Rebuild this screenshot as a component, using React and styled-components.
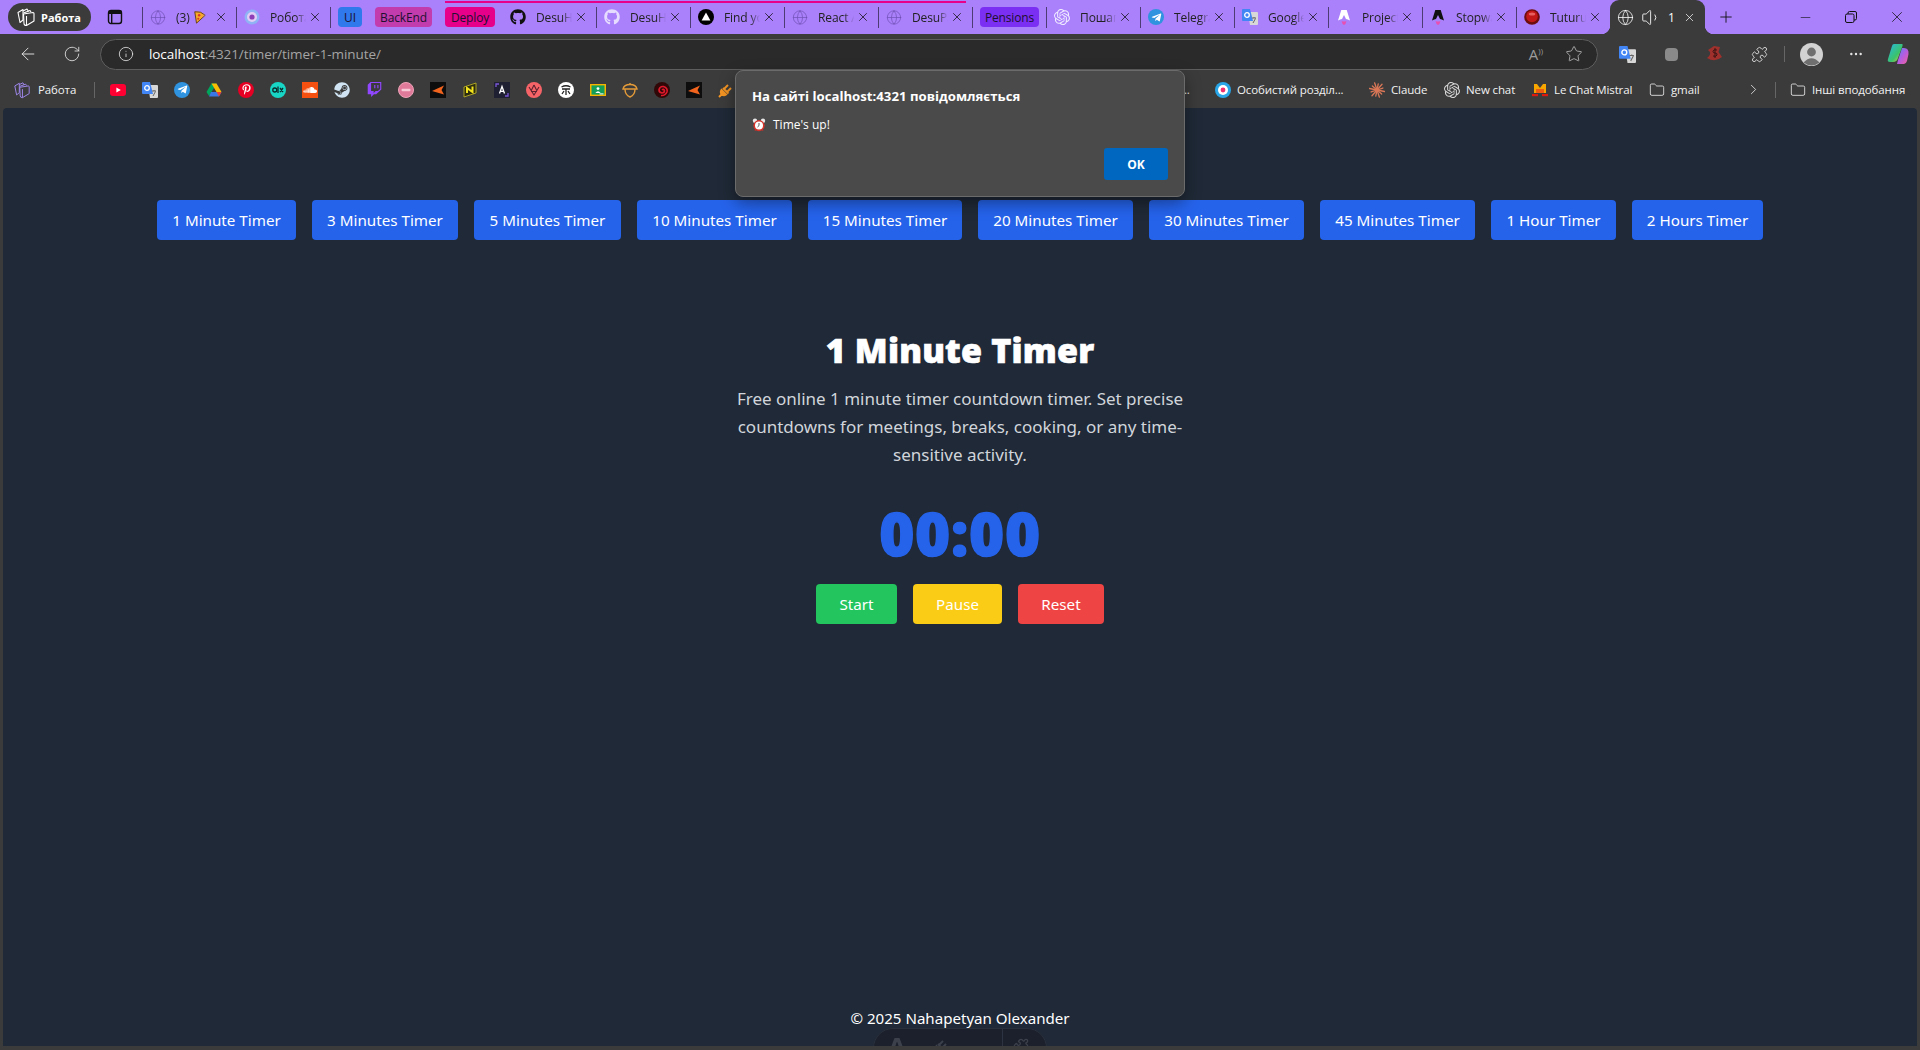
import React from "react";
import styled, { createGlobalStyle } from "styled-components";
import { Globe, Volume1, X, Plus, Minus, ArrowLeft, RotateCw, Info, Star, Ellipsis, ChevronRight, Folder, Puzzle } from "lucide-react";
import { FaGithub, FaTelegramPlane, FaPinterestP, FaSoundcloud, FaSteam, FaTwitch } from "react-icons/fa";
import { SiOpenai, SiAstro } from "react-icons/si";

const UI = `"Open Sans", "Noto Sans", sans-serif`;
const WEB = `"Noto Sans", "Open Sans", sans-serif`;

const Global = createGlobalStyle`
  html, body { margin: 0; padding: 0; background: #3b3b3b; }
  * { box-sizing: border-box; }
`;

const Window = styled.div`
  position: relative; width: 1920px; height: 1050px; display: flex; flex-direction: column;
  overflow: hidden; background: #3b3b3b; font-family: ${UI};
`;
const TabStrip = styled.div`
  height: 34px; flex: none; display: flex; align-items: center; background: #aa80fb; color: #1c1c1c; font-size: 12px;
`;
const WorkPill = styled.div`
  width: 83px; height: 28px; margin-left: 8px; border-radius: 14px; background: #3b3b3b; color: #fff;
  display: flex; align-items: center; gap: 5px; padding-left: 8px; font-size: 11px; font-weight: 700; flex: none;
`;
const SideBtn = styled.div` width: 20px; height: 20px; margin: 0 17px 0 14px; display: flex; align-items: center; justify-content: center; flex: none; `;
const Tab = styled.div`
  width: ${p => p.$w || 94}px; height: 21px; flex: none; display: flex; align-items: center; padding-left: 7px;
  border-left: ${p => (p.$noSep ? "1px solid transparent" : "1px solid #4d3b73")};
`;
const TabTitle = styled.div`
  flex: 1; min-width: 0; overflow: hidden; white-space: nowrap; letter-spacing: -0.1px; color: #222;
  display: flex; align-items: center; gap: 3px;
  -webkit-mask-image: linear-gradient(90deg, #000 72%, transparent 100%);
  mask-image: linear-gradient(90deg, #000 72%, transparent 100%);
`;
const TabClose = styled.div` width: 14px; margin: 0 8px 0 2px; display: flex; align-items: center; justify-content: center; flex: none; `;
const FavSlot = styled.div` width: 16px; height: 16px; margin-right: 10px; flex: none; display: flex; align-items: center; justify-content: center; `;
const Chip = styled.div`
  height: 20px; flex: none; margin-left: ${p => p.$ml}px; width: ${p => p.$w}px; border-radius: 4px; background: ${p => p.$bg}; color: #201030;
  display: flex; align-items: center; justify-content: center; font-size: 12px; letter-spacing: -0.15px;
`;
const Spacer = styled.div` width: ${p => p.$w}px; flex: none; `;
const DeployGroup = styled.div`
  position: relative; display: flex; align-items: center; height: 34px; flex: none;
  &::before { content: ""; position: absolute; left: 13px; right: 6px; top: 1px; height: 2px; background: #e6008a; }
`;
const ActiveTab = styled.div`
  position: relative; width: 95px; height: 34px; flex: none; background: #3b3b3b; border-radius: 9px 9px 0 0; color: #fff;
  display: flex; align-items: center; padding-left: 7px; font-size: 12px;
  &::before, &::after { content: ""; position: absolute; bottom: 0; width: 9px; height: 9px; }
  &::before { left: -9px; background: radial-gradient(circle at 0 0, transparent 9px, #3b3b3b 9.5px); }
  &::after { right: -9px; background: radial-gradient(circle at 100% 0, transparent 9px, #3b3b3b 9.5px); }
`;
const Speaker = styled(Volume1)` margin-left: 7px; flex: none; `;
const ActiveCount = styled.span` margin: 0 8px 0 6px; `;
const NewTab = styled.div` width: 20px; margin-left: 11px; display: flex; justify-content: center; flex: none; `;
const WinControls = styled.div` margin-left: auto; display: flex; flex: none; `;
const WinBtn = styled.div` width: 46px; height: 34px; display: flex; align-items: center; justify-content: center; `;

const Toolbar = styled.div` height: 40px; flex: none; display: flex; align-items: center; padding-left: 6px; color: #e8e8e8; `;
const ToolSlot = styled.div` width: ${p => p.$w || 44}px; height: 32px; flex: none; display: flex; align-items: center; justify-content: center; `;
const Address = styled.div`
  width: 1498px; height: 31px; flex: none; margin: 0 7px 0 6px; border-radius: 16px; background: #2a2a2a; border: 1px solid #5e5e5e;
  display: flex; align-items: center; padding: 0 14px 0 17px;
`;
const UrlText = styled.div` margin-left: 15px; font-size: 13.5px; letter-spacing: -0.08px; color: #a4a4a4; white-space: nowrap; `;
const UrlHost = styled.span` color: #fff; `;
const AddrRight = styled.div` margin-left: auto; display: flex; align-items: center; gap: 22px; `;
const ReadAloud = styled.span` color: #9c9c9c; font-size: 15px; line-height: 1; display: flex; `;
const ReadWaves = styled.span` font-size: 8px; `;
const ToolSep = styled.div` width: 1px; height: 16px; background: #666; margin: 0 4px 0 3px; flex: none; `;
const ExtDot = styled.div` width: 13px; height: 13px; border-radius: 4px; background: #8a8a8a; `;

const Bookmarks = styled.div` height: 34px; flex: none; display: flex; align-items: center; padding-bottom: 3px; color: #f2f2f2; font-size: 11.5px; letter-spacing: -0.12px; `;
const BmWork = styled.div` display: flex; align-items: center; gap: 7px; width: 94px; padding-left: 13px; flex: none; `;
const BmSep = styled.div` width: 1px; height: 16px; background: #666; flex: none; margin: ${p => p.$m || 0}; `;
const BmIcons = styled.div` display: flex; margin-left: 7px; flex: none; `;
const BmIcon = styled.div` width: 32px; height: 20px; display: flex; align-items: center; justify-content: center; flex: none; `;
const BmRight = styled.div` margin-left: auto; display: flex; align-items: center; padding-right: 14px; `;
const BmItem = styled.div` display: flex; align-items: center; gap: 6px; margin-left: ${p => p.$ml ?? 16}px; white-space: nowrap; flex: none; `;
const BmLabel = styled.span` display: block; width: ${p => p.$w}px; white-space: nowrap; `;
const BmChevron = styled.div` width: 20px; display: flex; justify-content: center; margin-left: 42px; flex: none; `;
const RoundFav = styled.div` width: 16px; height: 16px; border-radius: 50%; background: ${p => p.$bg}; display: flex; align-items: center; justify-content: center; `;
const SquareFav = styled.div` width: 16px; height: 16px; background: ${p => p.$bg}; display: flex; align-items: center; justify-content: center; `;

const Page = styled.main`
  position: relative; flex: 1; min-height: 0; margin: 0 3px 4px; background: #1f2937; border-radius: 4px 4px 0 0; overflow: hidden;
  display: flex; flex-direction: column; align-items: center; font-family: ${WEB}; color: #fff;
`;
const Nav = styled.nav` margin-top: 92px; display: flex; gap: 16px; justify-content: center; `;
const NavButton = styled.a`
  width: ${p => p.$w}px; height: 40px; border-radius: 4px; background: #2563eb; color: #fff; font-size: 15.2px;
  display: flex; align-items: center; justify-content: center; white-space: nowrap;
`;
const Title = styled.h1`
  margin: 90px 0 0; font-family: "Open Sans", sans-serif; font-size: 34px; line-height: 40px; font-weight: 800; letter-spacing: 0.2px; -webkit-text-stroke: 0.7px #fff; color: #fff;
`;
const Description = styled.p`
  margin: 15px 0 0; width: 448px; text-align: center; font-size: 17px; line-height: 28px; color: #d1d5db; white-space: nowrap;
`;
const Clock = styled.div`
  margin-top: 34px; margin-bottom: 1px; font-family: "Open Sans", sans-serif; font-size: 60px; line-height: 60px; font-weight: 800; color: #2563eb; -webkit-text-stroke: 1.4px #2563eb; letter-spacing: 0.7px;
`;
const Actions = styled.div` margin-top: 20px; display: flex; gap: 16px; `;
const ActionButton = styled.button`
  width: ${p => p.$w}px; height: 40px; border: 0; padding: 0; border-radius: 4px; background: ${p => p.$bg}; color: #fff; font: 15.2px ${WEB};
`;
const Footer = styled.footer` margin-top: auto; height: 40px; font-size: 15.1px; line-height: 24px; color: #fff; `;
const DevBar = styled.div`
  position: absolute; left: 870px; top: 920px; width: 174px; height: 44px; border-radius: 20px; background: #1b202c; border: 1px solid #2a303c;
  display: flex; align-items: flex-start; padding-top: 9px;
`;
const DevSlot = styled.div` width: ${p => p.$w}px; display: flex; justify-content: center; flex: none; color: #3b404b; `;
const DevSep = styled.div` width: 1px; height: 20px; margin-top: -9px; background: #2d3340; flex: none; `;

const Alert = styled.div`
  position: absolute; left: 735px; top: 70px; width: 450px; height: 127px; border-radius: 8px; background: #4a4a4a; border: 1px solid #6b6b6b;
  box-shadow: 0 6px 16px rgba(0,0,0,.38); padding: 15px 16px 0; color: #fff; display: flex; flex-direction: column;
`;
const AlertTitle = styled.div` font-size: 13.2px; line-height: 20px; font-weight: 700; `;
const AlertMessage = styled.div` margin-top: 10px; font-size: 12px; line-height: 18px; display: flex; align-items: center; gap: 7px; `;
const OkButton = styled.button`
  align-self: flex-end; margin: 14px 0 0; width: 64px; height: 32px; border: 0; border-radius: 3px; background: #0067c0; color: #fff; font: 700 12px ${UI};
`;

const Svg = ({ s = 16, v = "0 0 16 16", children }) => <svg width={s} height={s} viewBox={v}>{children}</svg>;

const WorkIcon = ({ c = "#fff", s = 20 }) => (
  <Svg s={s} v="0 0 20 20">
    <g fill="none" stroke={c} strokeWidth="1.1" strokeLinejoin="round">
      <path d="M2 5.5 L7 2.5 L7 13 L4 15.5 Z" />
      <path d="M7 4 L11 2 L12.5 4.5" />
      <path d="M7.5 6 L14 3.5 L15 5" />
      <path d="M7.5 7 L17 5.5 Q18 5.5 18 6.5 L18 14 L10.5 18.5 Q8 18.5 8 16.5 Z" />
      <path d="M10.5 18.5 V9" />
    </g>
  </Svg>
);
const SidebarIcon = () => (
  <Svg v="0 0 16 16">
    <rect x="1.5" y="1.5" width="13" height="13" rx="2.5" fill="none" stroke="#111" strokeWidth="1.4" />
    <rect x="1.5" y="1.5" width="13" height="3.5" fill="#111" />
    <rect x="4" y="4" width="1.4" height="10" fill="#111" />
  </Svg>
);
const Pizza = () => (
  <Svg s={14} v="0 0 16 16">
    <path d="M2 2 Q9 1 14 6 L4 15 Z" fill="#f7a928" stroke="#5a3410" strokeWidth="1" />
    <circle cx="7" cy="6" r="1.4" fill="#d8352a" /><circle cx="6" cy="10" r="1.2" fill="#d8352a" />
  </Svg>
);
const Ring = () => (
  <Svg v="0 0 16 16"><circle cx="8" cy="8" r="7.5" fill="#8fb3f4" /><circle cx="8" cy="8" r="5" fill="#e2cdf6" /><circle cx="8" cy="8" r="2.6" fill="#8e3fb8" /></Svg>
);
const NextIcon = () => (
  <Svg v="0 0 16 16"><circle cx="8" cy="8" r="8" fill="#000" /><path d="M8 3.6 L12.4 11.4 H3.6 Z" fill="#fff" /></Svg>
);
const GTrans = ({ s = 16 }) => (
  <Svg s={s} v="0 0 16 16">
    <path d="M6 3 H15 Q16 3 16 4 V15 Q16 16 15 16 H8 Z" fill="#d8d8d8" />
    <path d="M1 0 H8 L11 12 H1 Q0 12 0 11 V1 Q0 0 1 0 Z" fill="#4285f4" />
    <circle cx="5" cy="6" r="2.3" fill="none" stroke="#fff" strokeWidth="1.3" />
    <path d="M10 9 H14 M12 8 V9 M11 14 L13.5 9.5" stroke="#666" strokeWidth="1" fill="none" />
  </Svg>
);
const Astro = ({ c }) => (
  <Svg v="0 0 16 16">
    <path d="M5.3 1 H10.7 L14 11.5 Q11.5 10 10 10 L8 6 L6 10 Q4.5 10 2 11.5 Z" fill={c} />
    <path d="M5.6 12 Q8 13 10.4 12 Q10 15 8 16 Q6 15 5.6 12 Z" fill="#e84fb0" />
  </Svg>
);
const RedBall = () => (
  <Svg v="0 0 16 16"><circle cx="8" cy="8" r="7.8" fill="#6d0d0d" /><circle cx="8" cy="7.4" r="5.8" fill="#c31818" /><ellipse cx="8" cy="5" rx="3.2" ry="1.5" fill="#e66060" /></Svg>
);
const Yt = () => (
  <Svg v="0 0 16 16"><rect x="0" y="2" width="16" height="12" rx="3" fill="#ff0033" /><path d="M6.4 5.5 L10.8 8 L6.4 10.5 Z" fill="#fff" /></Svg>
);
const Tg = () => (
  <RoundFav $bg="#2f93e0"><FaTelegramPlane size={11} color="#fff" /></RoundFav>
);
const Drive = () => (
  <Svg v="0 0 16 16">
    <path d="M5.5 1.5 H10.5 L8 6 L5.5 10 L3 14 L0.5 10 Z" fill="#00a55c" />
    <path d="M5.5 1.5 H10.5 L15.5 10 H10.5 Z" fill="#fbbc04" />
    <path d="M5 10 H15.5 L13 14.5 H3 Z" fill="#3b78e7" />
    <path d="M10.5 10 H15.5 L13 14.5 Z" fill="#ea4335" />
  </Svg>
);
const Olx = () => (
  <Svg v="0 0 16 16">
    <circle cx="8" cy="8" r="8" fill="#18d6c6" />
    <circle cx="4.8" cy="8" r="2" fill="none" stroke="#0b2a2c" strokeWidth="1.3" />
    <path d="M8 4.5 V11 M10 6 L13 10 M13 6 L10 10" stroke="#0b2a2c" strokeWidth="1.3" fill="none" />
  </Svg>
);
const Pink = () => (
  <Svg v="0 0 16 16"><circle cx="8" cy="8" r="7.5" fill="#e07a9a" stroke="#eda3b8" /><rect x="3.5" y="6.8" width="9" height="2.4" rx="1" fill="#f7cbd8" /></Svg>
);
const Flash = () => (
  <Svg v="0 0 16 16"><rect width="16" height="16" fill="#0d0d0d" /><path d="M2 9 L14 3.5 L11.5 8 L14 12.5 Z" fill="#f2641e" /></Svg>
);
const NIcon = () => (
  <Svg v="0 0 16 16">
    <path d="M2 5 L14 1 V11 L2 15 Z" fill="#2d2d10" stroke="#c8bd24" strokeWidth=".8" />
    <path d="M5 11 V6 L10.5 10 V4.5" stroke="#f2e21e" strokeWidth="2" fill="none" />
  </Svg>
);
const AIcon = () => (
  <Svg v="0 0 16 16">
    <rect width="16" height="16" fill="#1f2133" />
    <path d="M2 5 V2 H5 M14 11 V14 H11" stroke="#7b57d8" strokeWidth="1.3" fill="none" />
    <path d="M5.5 11.5 L8 4.5 L10.5 11.5 M6.5 9.3 H9.5" stroke="#fff" strokeWidth="1.3" fill="none" />
  </Svg>
);
const Crown = () => (
  <Svg v="0 0 16 16">
    <circle cx="8" cy="8" r="8" fill="#f76468" />
    <path d="M3 5 L8 13 L13 5 M5 9.5 H11 M8 3 L5.5 8 M8 3 L10.5 8" stroke="#5c2430" strokeWidth="1.1" fill="none" />
  </Svg>
);
const WhiteSeal = () => (
  <Svg v="0 0 16 16">
    <circle cx="8" cy="8" r="8" fill="#fff" />
    <path d="M3.5 5 Q8 2.5 12.5 5 M4 7 H12 M8 7 V13 M6 9 L4 12 M10 9 L12 12" stroke="#222" strokeWidth="1.3" fill="none" />
  </Svg>
);
const Classroom = () => (
  <Svg v="0 0 16 16">
    <rect y="2" width="16" height="12" fill="#f4b400" /><rect x="1.5" y="3.4" width="13" height="9.2" fill="#129d58" />
    <circle cx="8" cy="6.6" r="1.4" fill="#fff" /><path d="M5.4 11 Q8 7.5 10.6 11 Z" fill="#fff" /><rect x="9.5" y="11.4" width="4" height="1" fill="#fff" />
  </Svg>
);
const Acorn = () => (
  <Svg v="0 0 16 16">
    <g fill="none" stroke="#e39a38" strokeWidth="1.4">
      <path d="M1 7 Q2 2.5 8 2.5 Q14 2.5 15 7 Z" /><path d="M3 7 Q3 13 8 15 Q13 13 13 7" /><path d="M8 2.5 V1" />
    </g>
  </Svg>
);
const Swirl = () => (
  <Svg v="0 0 16 16">
    <circle cx="8" cy="8" r="8" fill="#300808" />
    <path d="M8 8 Q9.5 6.5 10.5 8.5 Q10.5 11 8 11 Q4.8 10.5 5 7.5 Q6 4 9.5 4.5 Q14 6 13 10 Q11 14 7 13.5" stroke="#e0182b" strokeWidth="1.6" fill="none" />
  </Svg>
);
const PlugShape = ({ c = "#f39423" }) => (
  <Svg v="0 0 16 16">
    <path d="M1 15 L4 12 M3.5 8 L8 12.5 Q6 14 4 12.5 Q2 10.5 3.5 8 Z" stroke={c} strokeWidth="2" fill={c} />
    <path d="M6 7 L10 3 M9 10 L13 6 M5 6 L10.5 11.5" stroke={c} strokeWidth="2" fill="none" />
  </Svg>
);
const Osob = () => (
  <Svg v="0 0 16 16"><circle cx="8" cy="8" r="8" fill="#28a6e8" /><circle cx="8" cy="8" r="5" fill="#fff" /><circle cx="8" cy="8" r="2.4" fill="#ef2f6e" /></Svg>
);
const Claude = () => (
  <Svg v="0 0 16 16">
    <g stroke="#d97757" strokeWidth="1.3" strokeLinecap="round">
      {Array.from({ length: 12 }).map((_, i) => {
        const a = (i * Math.PI) / 6 + 0.2;
        const r = i % 2 ? 6.2 : 7.6;
        return <line key={i} x1="8" y1="8" x2={8 + r * Math.cos(a)} y2={8 + r * Math.sin(a)} />;
      })}
    </g>
  </Svg>
);
const Mistral = () => (
  <Svg v="0 0 16 16">
    <path d="M2 2 H5 L8 6 L11 2 H14 V11 H2 Z" fill="#f7a600" />
    <path d="M4 7 H12 V11 H4 Z" fill="#ee5a10" />
    <rect x="0" y="12" width="6" height="2.2" fill="#dd1a0e" /><rect x="10" y="12" width="6" height="2.2" fill="#dd1a0e" />
  </Svg>
);
const Restore = () => (
  <Svg v="0 0 16 16">
    <rect x="2.5" y="5" width="8.5" height="8.5" rx="1.5" fill="none" stroke="#111" />
    <path d="M5 5 V4 Q5 2.5 6.5 2.5 H12 Q13.5 2.5 13.5 4 V9.5 Q13.5 11 12 11 H11" fill="none" stroke="#111" />
  </Svg>
);
const RedExt = () => (
  <Svg s={20} v="0 0 20 20">
    <path d="M3 6 L9 2 L15 3 L13.5 8 L17 13 Q10 19 2 14 Q6 11 5 8 Z" fill="#a0302c" />
    <path d="M10 4 V14 M12 6 Q8 5 8 7.5 Q8 9 10 9 Q12.5 9 12 11 Q11.5 13 8 12" stroke="#3b1414" fill="none" />
  </Svg>
);
const Avatar = () => (
  <Svg s={23} v="0 0 23 23">
    <circle cx="11.5" cy="11.5" r="11.5" fill="#d2d2d2" />
    <circle cx="11.5" cy="9" r="4.4" fill="#6f6f6f" />
    <path d="M3.5 19.5 Q11.5 11 19.5 19.5 Q11.5 25.5 3.5 19.5 Z" fill="#6f6f6f" />
  </Svg>
);
const Copilot = () => (
  <svg width="22" height="22" viewBox="0 0 22 22">
    <defs>
      <linearGradient id="cpA" x1="0" y1="0" x2="1" y2="1"><stop offset="0" stopColor="#28b6e8" /><stop offset=".6" stopColor="#3ac36b" /><stop offset="1" stopColor="#f5c842" /></linearGradient>
      <linearGradient id="cpB" x1="0" y1="0" x2="1" y2="1"><stop offset="0" stopColor="#4d8df0" /><stop offset=".5" stopColor="#b45ce0" /><stop offset="1" stopColor="#f2609a" /></linearGradient>
    </defs>
    <path d="M7 1 H15 Q16 1 15.5 3 L11 15 Q10 19 6 19 H3 Q0 19 1 16 L5 3 Q5.5 1 7 1 Z" fill="url(#cpA)" />
    <path d="M10 21 H17 Q19 21 20 18 L21.5 11 Q22 5 17 5 H15 L11 17 Z" fill="url(#cpB)" />
  </svg>
);
const AlarmClock = () => (
  <Svg s={14} v="0 0 14 14">
    <circle cx="3" cy="2.8" r="2.2" fill="#e8e8e8" /><circle cx="11" cy="2.8" r="2.2" fill="#e8e8e8" />
    <circle cx="7" cy="7.6" r="5.6" fill="#d6322a" /><circle cx="7" cy="7.6" r="4" fill="#fff" />
    <path d="M7 5 V7.6 L5.5 9" stroke="#333" strokeWidth=".8" fill="none" />
    <path d="M3 12.8 L4 11.5 M11 12.8 L10 11.5" stroke="#d6322a" strokeWidth="1" />
  </Svg>
);

const globe = <Globe size={17} strokeWidth={1} color="#6c4fb0" />;
const tabsA = [
  { icon: globe, title: <>(3) <Pizza /></> },
  { icon: <Ring />, title: "Робота" },
];
const tabsB = [
  { icon: <FaGithub size={16} color="#111" />, title: "DesuHub" },
  { icon: <FaGithub size={16} color="#e6dcff" />, title: "DesuHub" },
  { icon: <NextIcon />, title: "Find your" },
  { icon: globe, title: "React App" },
  { icon: globe, title: "DesuPay" },
];
const tabsC = [
  { icon: <SiOpenai size={16} color="#f0ecff" />, title: "Пошагова" },
  { icon: <Tg />, title: "Telegram" },
  { icon: <GTrans />, title: "Google" },
  { icon: <Astro c="#fff" />, title: "Projects" },
  { icon: <Astro c="#111" />, title: "Stopwatch" },
  { icon: <RedBall />, title: "Tuturu" },
];
const bmIcons = [
  <Yt />, <GTrans />, <Tg />, <Drive />,
  <RoundFav $bg="#e60023"><FaPinterestP size={11} color="#fff" /></RoundFav>,
  <Olx />,
  <SquareFav $bg="#f5500f"><FaSoundcloud size={14} color="#fff" /></SquareFav>,
  <FaSteam size={16} color="#cfe3f2" />,
  <FaTwitch size={15} color="#9146ff" />,
  <Pink />, <Flash />, <NIcon />, <AIcon />, <Crown />, <WhiteSeal />, <Classroom />, <Acorn />, <Swirl />, <Flash />, <PlugShape />,
];
const timers = [
  ["1 Minute Timer", 139], ["3 Minutes Timer", 146], ["5 Minutes Timer", 147], ["10 Minutes Timer", 155], ["15 Minutes Timer", 154],
  ["20 Minutes Timer", 155], ["30 Minutes Timer", 155], ["45 Minutes Timer", 155], ["1 Hour Timer", 125], ["2 Hours Timer", 131],
];

const TabItem = ({ icon, title, noSep }) => (
  <Tab $noSep={noSep}>
    <FavSlot>{icon}</FavSlot>
    <TabTitle>{title}</TabTitle>
    <TabClose><X size={14} strokeWidth={1.3} color="#111" /></TabClose>
  </Tab>
);

export default function App() {
  return (
    <Window>
      <Global />
      <TabStrip>
        <WorkPill><WorkIcon />Работа</WorkPill>
        <SideBtn><SidebarIcon /></SideBtn>
        {tabsA.map((t, i) => <TabItem key={i} {...t} />)}
        <Tab $w={7} />
        <Chip $w={24} $ml={0} $bg="#2f79ec">UI</Chip>
        <Chip $w={57} $ml={13} $bg="#c23cae">BackEnd</Chip>
        <DeployGroup>
          <Chip $w={50} $ml={13} $bg="#e6008a">Deploy</Chip>
          <Spacer $w={7} />
          {tabsB.map((t, i) => <TabItem key={i} {...t} noSep={i === 0} />)}
        </DeployGroup>
        <Tab $w={7} />
        <Chip $w={59} $ml={0} $bg="#7b2ff2">Pensions</Chip>
        <Spacer $w={7} />
        {tabsC.map((t, i) => <TabItem key={i} {...t} />)}
        <ActiveTab>
          <Globe size={17} strokeWidth={1.1} color="#fff" />
          <Speaker size={21} strokeWidth={1} color="#fff" />
          <ActiveCount>1</ActiveCount>
          <X size={13} strokeWidth={1.3} color="#fff" />
        </ActiveTab>
        <NewTab><Plus size={18} strokeWidth={1.2} color="#111" /></NewTab>
        <WinControls>
          <WinBtn><Minus size={15} strokeWidth={1} color="#111" /></WinBtn>
          <WinBtn><Restore /></WinBtn>
          <WinBtn><X size={18} strokeWidth={1} color="#111" /></WinBtn>
        </WinControls>
      </TabStrip>

      <Toolbar>
        <ToolSlot><ArrowLeft size={20} strokeWidth={1.1} /></ToolSlot>
        <ToolSlot><RotateCw size={18} strokeWidth={1.1} /></ToolSlot>
        <Address>
          <Info size={16} strokeWidth={1.2} color="#e8e8e8" />
          <UrlText><UrlHost>localhost</UrlHost>:4321/timer/timer-1-minute/</UrlText>
          <AddrRight>
            <ReadAloud>A<ReadWaves>))</ReadWaves></ReadAloud>
            <Star size={18} strokeWidth={1} color="#c8c8c8" />
          </AddrRight>
        </Address>
        <ToolSlot><GTrans s={17} /></ToolSlot>
        <ToolSlot><ExtDot /></ToolSlot>
        <ToolSlot><RedExt /></ToolSlot>
        <ToolSlot><Puzzle size={17} strokeWidth={1.2} /></ToolSlot>
        <ToolSep />
        <ToolSlot><Avatar /></ToolSlot>
        <ToolSlot $w={46}><Ellipsis size={16} strokeWidth={1.6} /></ToolSlot>
        <ToolSlot $w={38}><Copilot /></ToolSlot>
      </Toolbar>

      <Bookmarks>
        <BmWork><WorkIcon c="#9d86e8" s={18} /><span>Работа</span></BmWork>
        <BmSep />
        <BmIcons>{bmIcons.map((b, i) => <BmIcon key={i}>{b}</BmIcon>)}</BmIcons>
        <BmRight>
          <BmItem><BmLabel $w={16}>...</BmLabel></BmItem>
          <BmItem $ml={18}><Osob /><BmLabel $w={116}>Особистий розділ...</BmLabel></BmItem>
          <BmItem><Claude /><BmLabel $w={37}>Claude</BmLabel></BmItem>
          <BmItem><SiOpenai size={16} color="#d8d8d8" /><BmLabel $w={50}>New chat</BmLabel></BmItem>
          <BmItem><Mistral /><BmLabel $w={79}>Le Chat Mistral</BmLabel></BmItem>
          <BmItem><Folder size={16} strokeWidth={1.2} /><BmLabel $w={30}>gmail</BmLabel></BmItem>
          <BmChevron><ChevronRight size={17} strokeWidth={1.1} /></BmChevron>
          <BmSep $m="0 14px 0 12px" />
          <BmItem $ml={0}><Folder size={16} strokeWidth={1.2} /><BmLabel $w={94}>Інші вподобання</BmLabel></BmItem>
        </BmRight>
      </Bookmarks>

      <Page>
        <Nav>
          {timers.map(([label, w]) => <NavButton key={label} $w={w}>{label}</NavButton>)}
        </Nav>
        <Title>1 Minute Timer</Title>
        <Description>
          Free online 1 minute timer countdown timer. Set precise<br />
          countdowns for meetings, breaks, cooking, or any time-<br />
          sensitive activity.
        </Description>
        <Clock>00:00</Clock>
        <Actions>
          <ActionButton $w={81} $bg="#22c55e">Start</ActionButton>
          <ActionButton $w={89} $bg="#facc15">Pause</ActionButton>
          <ActionButton $w={86} $bg="#ef4444">Reset</ActionButton>
        </Actions>
        <Footer>© 2025 Nahapetyan Olexander</Footer>
        <DevBar>
          <DevSlot $w={46}><SiAstro size={16} /></DevSlot>
          <DevSlot $w={41}><PlugShape c="#3b404b" /></DevSlot>
          <DevSlot $w={41}><Minus size={18} strokeWidth={3} /></DevSlot>
          <DevSep />
          <DevSlot $w={36}><Puzzle size={16} /></DevSlot>
        </DevBar>
      </Page>

      <Alert>
        <AlertTitle>На сайті localhost:4321 повідомляється</AlertTitle>
        <AlertMessage><AlarmClock />Time's up!</AlertMessage>
        <OkButton>OK</OkButton>
      </Alert>
    </Window>
  );
}
